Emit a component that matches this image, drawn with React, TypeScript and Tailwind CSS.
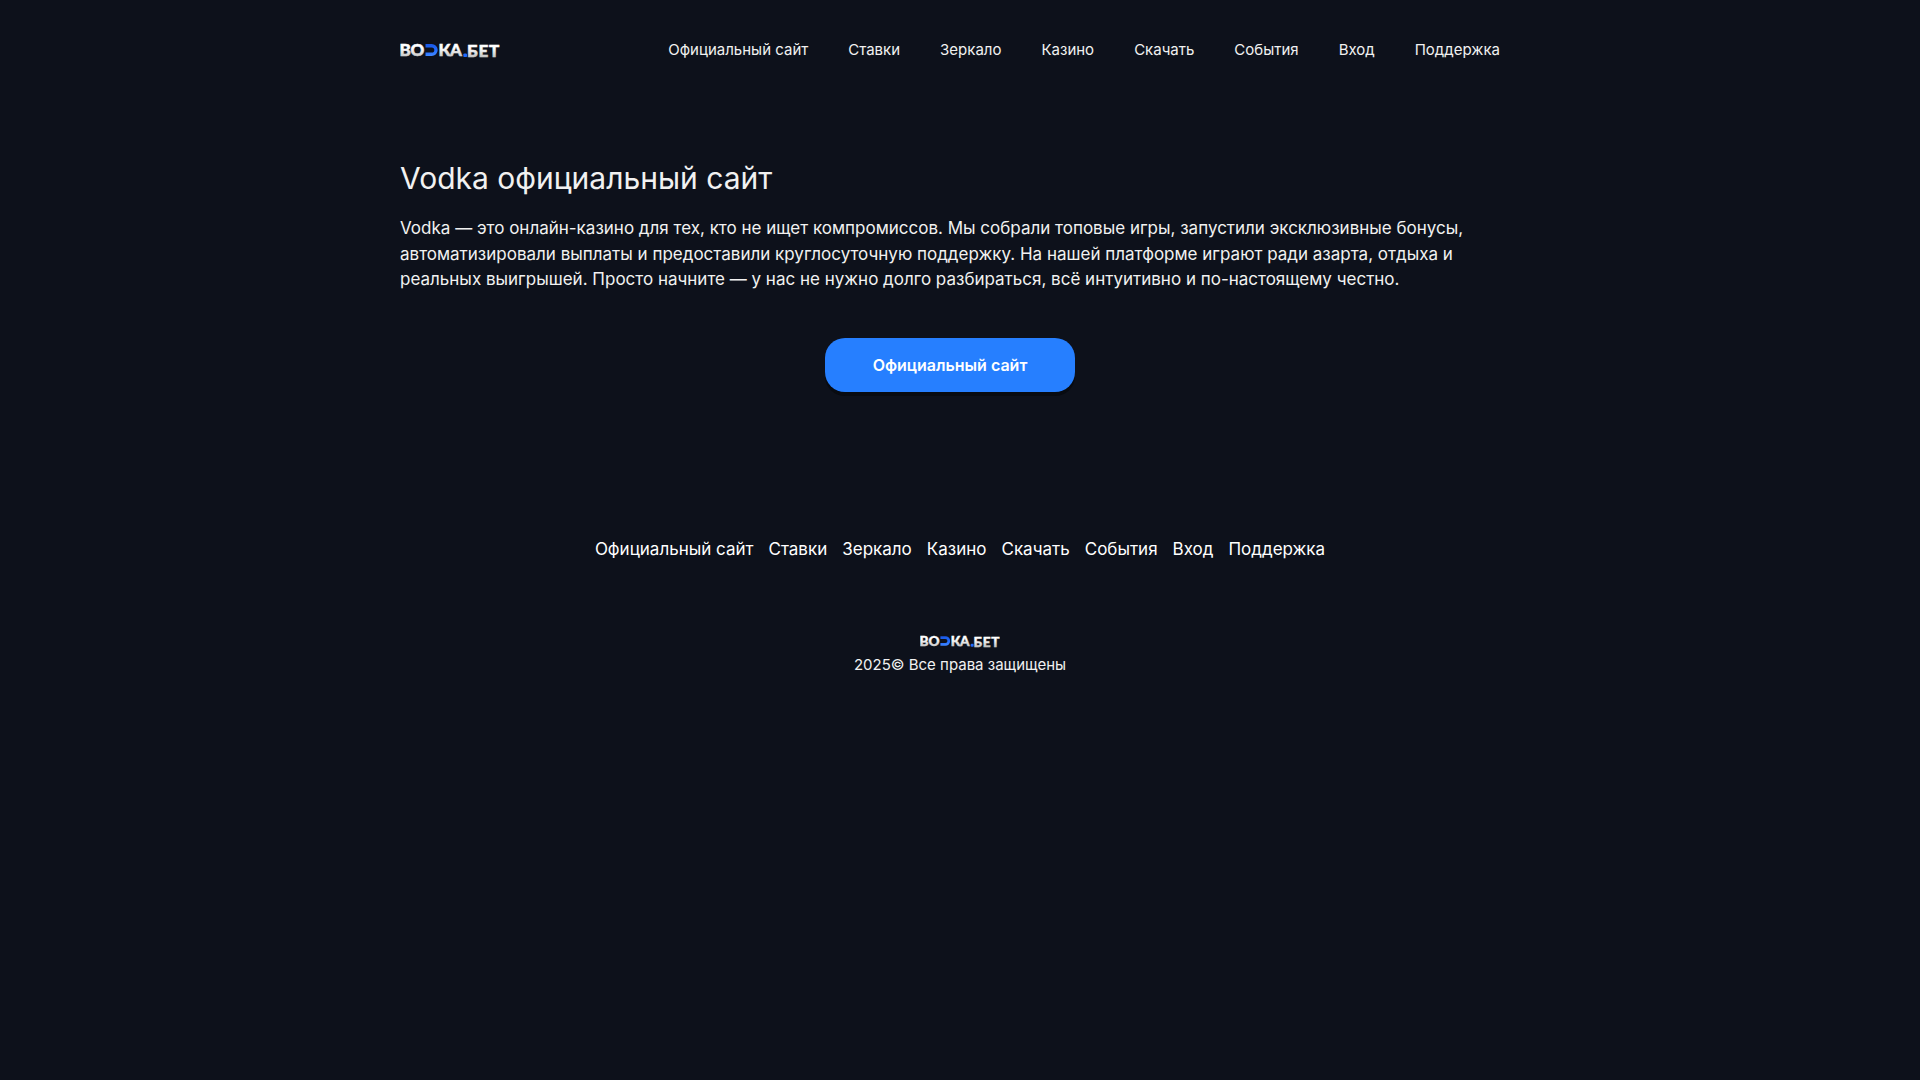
const links = [
  "Официальный сайт",
  "Ставки",
  "Зеркало",
  "Казино",
  "Скачать",
  "События",
  "Вход",
  "Поддержка",
];

function Logo({ id, className }: { id: string; className: string }) {
  const silver = `${id}-silver`;
  const blue = `${id}-blue`;
  return (
    <svg viewBox="0 0 100 20" className={className} role="img" aria-label="ВОДКА.БЕТ">
      <defs>
        <linearGradient id={silver} gradientUnits="userSpaceOnUse" x1="0" y1="4" x2="0" y2="17">
          <stop offset="0.3" stopColor="#ffffff" />
          <stop offset="1" stopColor="#c4c4c4" />
        </linearGradient>
        <linearGradient id={blue} gradientUnits="userSpaceOnUse" x1="26" y1="4" x2="28" y2="16">
          <stop offset="0" stopColor="#1b56e0" />
          <stop offset="0.6" stopColor="#1f6aff" />
          <stop offset="1" stopColor="#3f86ff" />
        </linearGradient>
      </defs>
      <g
        fill={`url(#${silver})`}
        stroke={`url(#${silver})`}
        strokeWidth="0.500"
        fontSize="17"
        fontWeight="900"
        className="font-['Lato']"
      >
        <text x="-0.500 10.500 38.500 50" y="16">ВОКА</text>
        <text x="67 78.500 89" y="17">БЕТ</text>
      </g>
      <path d="M25.500 5.700h6.200a4.300 4.300 0 0 1 0 8.600H25.500" fill="none" stroke={`url(#${blue})`} strokeWidth="3.400" />
      <rect x="63.300" y="13.400" width="3.700" height="3.700" rx="1.200" fill="#1f6aff" />
    </svg>
  );
}

export default function App() {
  return (
    <div className="min-h-screen bg-[#0d111b] font-['Inter',sans-serif] text-[#f1f1f1]">
      <div className="mx-auto max-w-[1120px]">
        <header className="flex h-[100px] items-center justify-between pr-5">
          <a href="#">
            <Logo id="logo-top" className="h-5 w-[100px]" />
          </a>
          <nav className="flex gap-10 text-[15px]">
            {links.map((label) => (
              <a key={label} href="#">
                {label}
              </a>
            ))}
          </nav>
        </header>
        <main className="pt-[55px] pr-5">
          <h1 className="text-[30px] leading-[46px]">Vodka официальный сайт</h1>
          <p className="mt-[15px] text-[17px] leading-[1.5]">
            Vodka — это онлайн-казино для тех, кто не ищет компромиссов. Мы собрали топовые игры, запустили
            эксклюзивные бонусы, автоматизировали выплаты и предоставили круглосуточную поддержку. На нашей
            платформе играют ради азарта, отдыха и реальных выигрышей. Просто начните — у нас не нужно долго
            разбираться, всё интуитивно и по-настоящему честно.
          </p>
          <div className="mt-[45px] flex justify-center">
            <button
              type="button"
              className="h-[54px] w-[250px] rounded-[20px] bg-[#267fff] text-base font-semibold text-white shadow-[0_4px_0_#080b11]"
            >
              Официальный сайт
            </button>
          </div>
        </main>
        <footer className="flex flex-col items-center pt-[144px]">
          <nav className="flex gap-[15px] text-[17px] leading-[26px] text-white">
            {links.map((label) => (
              <a key={label} href="#">
                {label}
              </a>
            ))}
          </nav>
          <a href="#" className="mt-[71px]">
            <Logo id="logo-bottom" className="h-4 w-20" />
          </a>
          <p className="mt-1 text-[15px] leading-[23px]">2025© Все права защищены</p>
        </footer>
      </div>
    </div>
  );
}
